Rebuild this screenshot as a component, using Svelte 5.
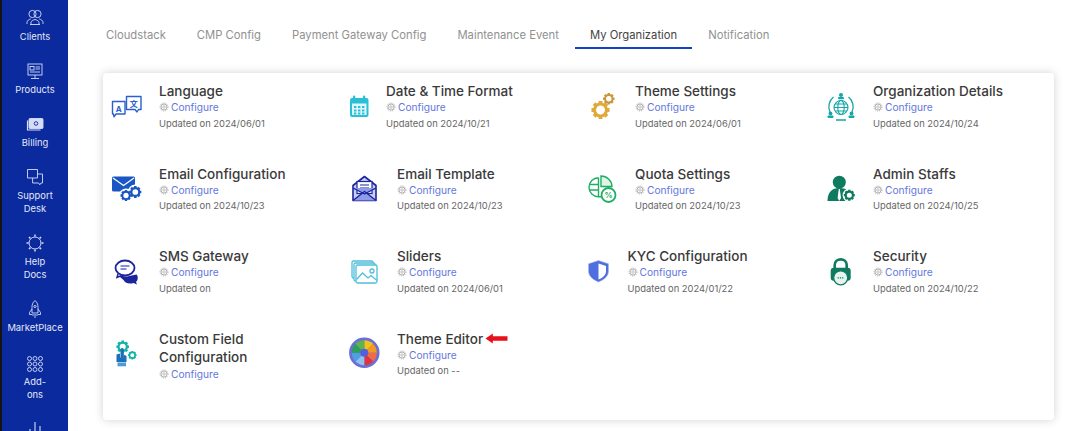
<script>
  const nav = [
    { id: 'clients', lines: ['Clients'] },
    { id: 'products', lines: ['Products'] },
    { id: 'billing', lines: ['Billing'] },
    { id: 'support', lines: ['Support', 'Desk'] },
    { id: 'help', lines: ['Help', 'Docs'] },
    { id: 'market', lines: ['MarketPlace'] },
    { id: 'addons', lines: ['Add-', 'ons'], cls: 'shift' },
    { id: 'reports', lines: [] }
  ];
  const tabs = ['Cloudstack', 'CMP Config', 'Payment Gateway Config', 'Maintenance Event', 'My Organization', 'Notification'];
  const items = [
    { id: 'language', lines: ['Language'], updated: 'Updated on 2024/06/01' },
    { id: 'calendar', lines: ['Date & Time Format'], updated: 'Updated on 2024/10/21', cls: 'narrow' },
    { id: 'gears', lines: ['Theme Settings'], updated: 'Updated on 2024/06/01' },
    { id: 'org', lines: ['Organization Details'], updated: 'Updated on 2024/10/24' },
    { id: 'emailconf', lines: ['Email Configuration'], updated: 'Updated on 2024/10/23' },
    { id: 'template', lines: ['Email Template'], updated: 'Updated on 2024/10/23' },
    { id: 'quota', lines: ['Quota Settings'], updated: 'Updated on 2024/10/23' },
    { id: 'admin', lines: ['Admin Staffs'], updated: 'Updated on 2024/10/25' },
    { id: 'sms', lines: ['SMS Gateway'], updated: 'Updated on' },
    { id: 'sliders', lines: ['Sliders'], updated: 'Updated on 2024/06/01' },
    { id: 'shield', lines: ['KYC Configuration'], updated: 'Updated on 2024/01/22', cls: 'mid' },
    { id: 'lock', lines: ['Security'], updated: 'Updated on 2024/10/22' },
    { id: 'custom', lines: ['Custom Field', 'Configuration'], cls: 'two' },
    { id: 'palette', lines: ['Theme Editor'], updated: 'Updated on --', arrow: true }
  ];
  const gearTeeth = [0, 45, 90, 135];
</script>

{#snippet gear(cx, cy, r, color, sw)}
  <circle {cx} {cy} r={r * 0.66} fill="none" stroke={color} stroke-width={sw} />
  {#each gearTeeth as a}
    <line x1={cx} y1={cy - r} x2={cx} y2={cy + r} stroke={color} stroke-width={r * 0.42} stroke-dasharray="{r * 0.42} {r * 1.16}" transform="rotate({a} {cx} {cy})" />
  {/each}
{/snippet}

{#snippet navIcon(id)}
  <svg class="navsvg" viewBox="0 0 20 20" fill="none" stroke="#d5dcf5" stroke-width="0.9">
    {#if id === 'clients'}
      <circle cx="7.500" cy="6" r="3.600" />
      <circle cx="12.500" cy="6" r="3.600" />
      <path d="M2 16v-1.500c0-2 2-3 3.800-3.600M18 16v-1.500c0-2-2-3-3.800-3.600M5 16.500h10M6 16.500v-2c0-1.500 2-2.500 4-3 2 .5 4 1.500 4 3v2" />
    {:else if id === 'products'}
      <rect x="3" y="3" width="14" height="11" />
      <rect x="5" y="5.500" width="4" height="3.500" />
      <path d="M10.500 6h4.500M10.500 8h4.500M5 11h10M10 14v3M6 17.500h8" />
    {:else if id === 'billing'}
      <rect x="4" y="4.500" width="14" height="10" rx="1" fill="#d5dcf5" />
      <circle cx="11" cy="9.500" r="1.800" stroke="#0a2a9e" />
      <path d="M2.500 6.500v9.500h13" stroke-width="1.200" />
    {:else if id === 'support'}
      <path d="M2.500 2.500h10v8.500h-10z" />
      <path d="M12.500 7h5v9h-1.500l-1.200 1.800-1.200-1.800h-6v-5" />
    {:else if id === 'help'}
      <circle cx="10" cy="10" r="6" stroke-width="1" />
      {#each gearTeeth as a}
        <line x1="10" y1="1.500" x2="10" y2="18.500" stroke-width="1.500" stroke-dasharray="2 13" transform="rotate({a} 10 10)" />
      {/each}
    {:else if id === 'market'}
      <path d="M10 1.500c2.500 2 3 4.500 3 7v5.500h-6v-5.500c0-2.500.5-5 3-7z" />
      <circle cx="10" cy="7.500" r="1.100" />
      <path d="M7 10l-2.500 3.500v2h2.500M13 10l2.500 3.500v2h-2.500M10 15v4M8 15v2M12 15v2" />
    {:else if id === 'addons'}
      {#each [4.500, 10, 15.500] as y}
        {#each [4.500, 10, 15.500] as x}
          <circle cx={x} cy={y} r="2" />
        {/each}
      {/each}
    {:else}
      <path d="M10 2v16M5 9v9M15 6v12" stroke-width="1.100" />
    {/if}
  </svg>
{/snippet}

{#snippet icon(id)}
  <svg class="ico" viewBox="0 0 40 40">
    {#if id === 'language'}
      <g fill="none" stroke="#2b5fd0" stroke-width="1.400" stroke-linejoin="round">
        <path d="M5.500 14.500h12.500v12.500h-9l-2 2.800-.5-2.800h-1z" />
        <path d="M19.500 9.500h14.500v13h-2.500l-1.500 2.500-2-2.500h-8.500z" fill="#fff" />
      </g>
      <text x="11.700" y="24.500" class="glyph" fill="#2b5fd0">A</text>
      <text x="26.700" y="19.500" class="glyph" fill="#2b5fd0">文</text>
    {:else if id === 'calendar'}
      <rect x="5" y="11" width="18.500" height="19" rx="2" fill="#29bfd6" />
      <rect x="8" y="8.500" width="2.200" height="5" rx="1" fill="#29bfd6" />
      <rect x="18" y="8.500" width="2.200" height="5" rx="1" fill="#29bfd6" />
      <rect x="7" y="16.500" width="14.500" height="11.500" fill="#dff6fa" />
      {#each [19, 22.500, 25.500] as y}
        {#each [9, 13, 17] as x}
          <rect {x} {y} width="2.400" height="2" fill="#29bfd6" />
        {/each}
      {/each}
    {:else if id === 'gears'}
      {@render gear(17.500, 23, 9, '#e0a93a', 3)}
      {@render gear(25.800, 11.800, 5.700, '#c9963a', 2)}
    {:else if id === 'org'}
      <g fill="none" stroke="#14a6a8" stroke-width="1.100">
        <circle cx="20" cy="20.500" r="7" />
        <ellipse cx="20" cy="20.500" rx="3.200" ry="7" />
        <path d="M13 20.500h14M14 17h12M14 24h12" />
        <path d="M9 25a12.500 12.500 0 0 1 3.500-15M31 25a12.500 12.500 0 0 0-3.500-15M15 33h10" stroke-width="1.300" />
      </g>
      <g fill="#14a6a8">
        <circle cx="20" cy="8" r="2" /><rect x="17" y="10" width="6" height="2.300" rx="1" />
        <circle cx="9.500" cy="26.500" r="1.900" /><rect x="6.500" y="28.500" width="6" height="2.500" rx="1" />
        <circle cx="30.500" cy="26.500" r="1.900" /><rect x="27.500" y="28.500" width="6" height="2.500" rx="1" />
      </g>
    {:else if id === 'emailconf'}
      <rect x="5" y="7.500" width="23" height="15" rx="1.500" fill="#1a56c4" />
      <path d="M6 9l10.500 7.500 10.500-7.500" fill="none" stroke="#fff" stroke-width="1.200" />
      <circle cx="19" cy="26.500" r="7" fill="#fff" />
      <circle cx="28.300" cy="23" r="7.500" fill="#fff" />
      {@render gear(19, 26.500, 5.500, '#1a56c4', 2)}
      {@render gear(28.300, 23, 6, '#1a56c4', 2.200)}
    {:else if id === 'template'}
      <path d="M8 16.500l11.500-9 11.500 9v15h-23z" fill="#c9d0f5" stroke="#1c259c" stroke-width="1.600" stroke-linejoin="round" />
      <rect x="12" y="12.500" width="15" height="12" fill="#fff" stroke="#1c259c" stroke-width="1.200" />
      <path d="M15 16h9M15 19h9" stroke="#1c259c" stroke-width="1.200" />
      <path d="M8 31.500l11.500-9 11.500 9M8 19l11.500 6 11.500-6" fill="#8f9be8" stroke="#1c259c" stroke-width="1.400" stroke-linejoin="round" />
    {:else if id === 'quota'}
      <g fill="none" stroke="#1fae63" stroke-width="1.400">
        <path d="M15.500 8.800a9.500 9.500 0 0 0 0 19h3M6.500 15.500h9M6.500 21h9M15.500 8.800v19" />
        <path d="M18 7v10.500h11a11 11 0 0 0-11-10.500z" fill="#dff5e8" />
        <circle cx="25.500" cy="26" r="7" fill="#fff" stroke-width="1.800" />
      </g>
      <text x="25.500" y="29" class="glyph pct" fill="#1fae63">%</text>
    {:else if id === 'admin'}
      <circle cx="18.300" cy="13.200" r="6.500" fill="#0e7a5f" />
      <path d="M6.500 32c0-9 4.500-13 11.800-13s8.700 3 9.700 6l-4 7z" fill="#0e7a5f" />
      <path d="M17.800 20h1l1.200 9-1.700 3-1.700-3z" fill="#fff" />
      <circle cx="28.300" cy="26.200" r="6.700" fill="#fff" />
      {@render gear(28.300, 26.200, 5.500, '#0e7a5f', 2.200)}
    {:else if id === 'sms'}
      <path d="M10 22.500c4.500 0 5 2 10 2l9.500-2c2 2 1.500 6-.5 7.500l1 2.500-3.500-1.500c-5 1.500-9-.5-10-3z" fill="#1c259c" />
      <ellipse cx="18" cy="16" rx="9.500" ry="7.500" fill="#fff" stroke="#1c259c" stroke-width="1.800" />
      <path d="M13.500 14h9M13.500 17h6" stroke="#5d6bdc" stroke-width="1.500" />
      <path d="M11 22l-1 3.500 4-1.800" fill="#fff" stroke="#1c259c" stroke-width="1.500" />
    {:else if id === 'sliders'}
      <g fill="#fff" stroke="#4fbfdc" stroke-width="1.300">
        <rect x="7" y="9" width="21" height="17" rx="1.500" />
        <rect x="9" y="11" width="21" height="18" rx="1.500" />
        <rect x="11" y="13" width="21" height="18" rx="1.500" />
        <path d="M11.500 27.500l6-6.500 5.500 5 3-2.500 6 5" fill="none" />
        <circle cx="27" cy="19" r="2" />
      </g>
    {:else if id === 'shield'}
      <path d="M15.500 8.500l10 3.300v7c0 5.500-4 8.700-10 11.200-6-2.500-10-5.700-10-11.200v-7z" fill="#4f6fe0" stroke="#a9b8f0" stroke-width=".6" />
      <path d="M15.500 11.500l7.500 2.500v5c0 4-3 6.500-7.500 8.500z" fill="#fff" />
    {:else if id === 'lock'}
      <path d="M13.700 17v-4c0-7.500 12-7.500 12 0v4" fill="none" stroke="#0f7a60" stroke-width="2.600" />
      <rect x="9.700" y="15.800" width="20" height="13" rx="3" fill="#0f7a60" />
      <circle cx="19.700" cy="25.800" r="7" fill="#e6f3ee" stroke="#0f7a60" stroke-width="1.200" />
      <path d="M16.700 25.800h6" stroke="#0f7a60" stroke-width="1.200" stroke-dasharray="1.200 1" />
    {:else if id === 'custom'}
      {@render gear(15.700, 12.800, 6.300, '#12b5a5', 2.200)}
      {@render gear(25.300, 21.200, 4.300, '#12b5a5', 1.700)}
      <rect x="13.500" y="14" width="3.300" height="11" rx="1.600" fill="#1b70b8" />
      <path d="M9.500 20.500v7.500h10v-6l-3-1.500v3h-3.500v-4z" fill="#1b70b8" />
      <rect x="10.500" y="28.500" width="8.500" height="3.800" fill="#4c9bd8" />
    {:else if id === 'palette'}
      <circle cx="19.300" cy="18.700" r="15.200" fill="#6a6fd6" />
      <path d="M19.300 6.200a12.500 12.500 0 0 1 8.840 3.660l-8.840 8.840z" fill="#f2c31b" />
      <path d="M28.140 9.860a12.500 12.500 0 0 1 3.660 8.840h-12.500z" fill="#f39a1f" />
      <path d="M31.800 18.700a12.500 12.500 0 0 1-3.660 8.840l-8.840-8.840z" fill="#f16a4a" />
      <path d="M28.140 27.540a12.500 12.500 0 0 1-8.840 3.660v-12.500z" fill="#e0333a" />
      <path d="M19.300 31.200a12.500 12.500 0 0 1-8.840-3.660l8.840-8.840z" fill="#8fc1f2" />
      <path d="M10.460 27.540a12.500 12.500 0 0 1-3.660-8.840h12.500z" fill="#4fa0e0" />
      <path d="M6.800 18.700a12.500 12.500 0 0 1 3.660-8.840l8.840 8.840z" fill="#2e9e5b" />
      <path d="M10.460 9.860a12.500 12.500 0 0 1 8.840-3.660v12.500z" fill="#5fb548" />
      <circle cx="19.300" cy="18.700" r="4" fill="#5560d8" />
    {/if}
  </svg>
{/snippet}

<div class="page">
  <aside class="side">
    {#each nav as n}
      <div class="navitem {n.cls ?? ''}">
        {@render navIcon(n.id)}
        {#each n.lines as l}<span class="navlabel">{l}</span>{/each}
      </div>
    {/each}
  </aside>
  <main class="main">
    <nav class="tabs">
      {#each tabs as t, i}
        <span class="tab" class:active={i === 4}>{t}</span>
      {/each}
    </nav>
    <section class="card">
      {#each items as it}
        <article class="item {it.cls ?? ''}">
          {@render icon(it.id)}
          <div class="body">
            <h3 class="title">
              {#each it.lines as l}<span class="tline">{l}</span>{/each}
              {#if it.arrow}
                <svg class="arrow" viewBox="0 0 24 12"><path d="M0 6l8-5.500v3h16v5h-16v3z" fill="#e8101c" /></svg>
              {/if}
            </h3>
            <div class="cfg">
              <svg class="cfgico" viewBox="0 0 12 12">
                <circle cx="6" cy="6" r="3.600" fill="none" stroke="#9a9a9a" stroke-width=".9" />
                <circle cx="6" cy="6" r="1.500" fill="none" stroke="#9a9a9a" stroke-width=".7" />
                <circle cx="6" cy="6" r="4.800" fill="none" stroke="#9a9a9a" stroke-width="1" stroke-dasharray="1.200 1.200" />
              </svg>
              <span class="cfgtxt">Configure</span>
            </div>
            {#if it.updated}<p class="upd">{it.updated}</p>{/if}
          </div>
        </article>
      {/each}
    </section>
  </main>
</div>

<style>
  :global(body) { margin: 0; background: #fff; }
  .page {
    display: flex;
    width: 1067px;
    height: 431px;
    overflow: hidden;
    font-family: Inter, "Liberation Sans", sans-serif;
  }
  .side {
    flex: 0 0 66px;
    display: flex;
    flex-direction: column;
    align-items: center;
    gap: 19.500px;
    padding-top: 9px;
    background: #0a2a9e;
    border-left: 2px solid #141414;
    overflow: hidden;
  }
  .navitem { display: flex; flex-direction: column; align-items: center; }
  .navitem.shift { margin-top: 1.500px; }
  .navsvg { width: 20px; height: 20px; margin: -1px 0 1.500px; }
  .navlabel {
    display: block;
    font-size: 9.400px;
    line-height: 13px;
    color: #e4e8f8;
    white-space: nowrap;
  }
  .main { flex: 1; min-width: 0; padding: 20px 13px 0 23px; }
  .tabs { display: flex; gap: 2px; height: 29px; padding-left: 0.500px; }
  .tab {
    padding: 0 14.500px;
    height: 27px;
    line-height: 30px;
    font-size: 11.250px;
    color: #919191;
    white-space: nowrap;
  }
  .tab.active { color: #444; border-bottom: 2px solid #1245bd; }
  .card {
    margin: 24px 0 0 12px;
    height: 347px;
    box-sizing: border-box;
    padding-top: 9px;
    display: grid;
    grid-template-columns: repeat(4, 238px);
    grid-auto-rows: 82.500px;
    border-radius: 4px;
    background: #fff;
    box-shadow: 0 0 10px rgba(0, 0, 0, 0.18);
  }
  .item { display: flex; align-items: flex-start; padding-left: 4px; }
  .ico { flex: none; width: 40px; height: 40px; margin: 4.500px 12px 0 0; }
  .item.narrow .ico { margin-right: 1px; }
  .item.mid .ico { margin-right: 4.500px; }
  .glyph { font-size: 8px; font-weight: 700; text-anchor: middle; font-family: Inter, "Noto Sans CJK SC", sans-serif; }
  .pct { font-size: 8px; }
  .body { min-width: 0; }
  .title {
    margin: 0;
    font-size: 13.500px;
    font-weight: 500;
    line-height: 18px;
    color: #3a3a3a;
    display: block;
  }
  .tline { display: block; }
  .title:has(.arrow) { display: flex; align-items: center; gap: 2px; }
  .arrow { width: 23px; height: 11px; }
  .cfg { display: flex; align-items: center; gap: 2px; height: 15px; margin-top: -0.500px; }
  .item.two .cfg { margin-top: 1px; }
  .cfgico { width: 10px; height: 10px; }
  .cfgtxt { font-size: 10.200px; color: #6478dc; }
  .upd { margin: 1px 0 0; font-size: 9.400px; line-height: 15px; color: #666; white-space: nowrap; }
</style>
